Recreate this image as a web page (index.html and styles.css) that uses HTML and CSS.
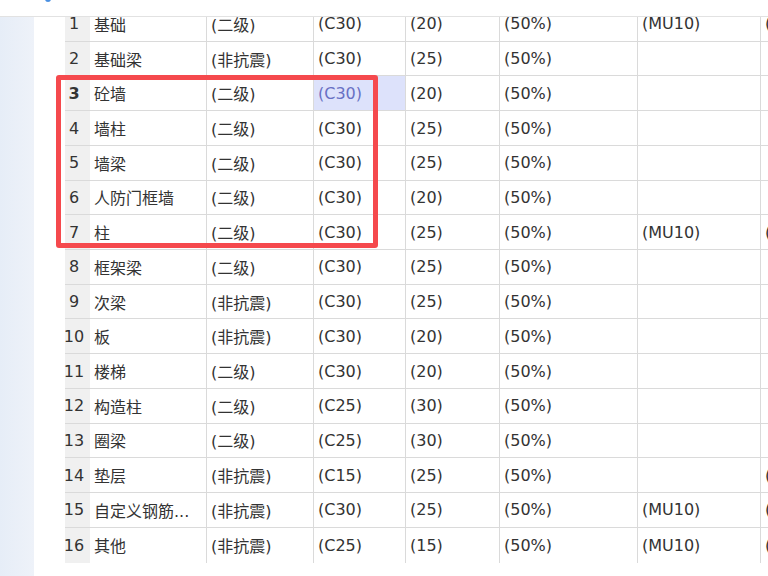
FILE: index.html
```html
<!DOCTYPE html>
<html lang="zh-CN">
<head>
<meta charset="utf-8">
<title>材料设置</title>
<link rel="stylesheet" href="styles.css">
</head>
<body>
<div class="topbar"><span class="dot"></span></div>
<div class="main">
  <div class="side"></div>
  <div class="content">
    <div class="grid">
      <div class="row"><div class="num">1</div><div class="c">基础</div><div class="c">(二级)</div><div class="c">(C30)</div><div class="c">(20)</div><div class="c">(50%)</div><div class="c">(MU10)</div><div class="c">(M5)</div></div>
      <div class="row"><div class="num">2</div><div class="c">基础梁</div><div class="c">(非抗震)</div><div class="c">(C30)</div><div class="c">(25)</div><div class="c">(50%)</div><div class="c"></div><div class="c"></div></div>
      <div class="row"><div class="num bold">3</div><div class="c">砼墙</div><div class="c">(二级)</div><div class="c sel">(C30)</div><div class="c">(20)</div><div class="c">(50%)</div><div class="c"></div><div class="c"></div></div>
      <div class="row"><div class="num">4</div><div class="c">墙柱</div><div class="c">(二级)</div><div class="c">(C30)</div><div class="c">(25)</div><div class="c">(50%)</div><div class="c"></div><div class="c"></div></div>
      <div class="row"><div class="num">5</div><div class="c">墙梁</div><div class="c">(二级)</div><div class="c">(C30)</div><div class="c">(25)</div><div class="c">(50%)</div><div class="c"></div><div class="c"></div></div>
      <div class="row"><div class="num">6</div><div class="c">人防门框墙</div><div class="c">(二级)</div><div class="c">(C30)</div><div class="c">(20)</div><div class="c">(50%)</div><div class="c"></div><div class="c"></div></div>
      <div class="row"><div class="num">7</div><div class="c">柱</div><div class="c">(二级)</div><div class="c">(C30)</div><div class="c">(25)</div><div class="c">(50%)</div><div class="c">(MU10)</div><div class="c">(M5)</div></div>
      <div class="row"><div class="num">8</div><div class="c">框架梁</div><div class="c">(二级)</div><div class="c">(C30)</div><div class="c">(25)</div><div class="c">(50%)</div><div class="c"></div><div class="c"></div></div>
      <div class="row"><div class="num">9</div><div class="c">次梁</div><div class="c">(非抗震)</div><div class="c">(C30)</div><div class="c">(25)</div><div class="c">(50%)</div><div class="c"></div><div class="c"></div></div>
      <div class="row"><div class="num">10</div><div class="c">板</div><div class="c">(非抗震)</div><div class="c">(C30)</div><div class="c">(20)</div><div class="c">(50%)</div><div class="c"></div><div class="c"></div></div>
      <div class="row"><div class="num">11</div><div class="c">楼梯</div><div class="c">(二级)</div><div class="c">(C30)</div><div class="c">(20)</div><div class="c">(50%)</div><div class="c"></div><div class="c"></div></div>
      <div class="row"><div class="num">12</div><div class="c">构造柱</div><div class="c">(二级)</div><div class="c">(C25)</div><div class="c">(30)</div><div class="c">(50%)</div><div class="c"></div><div class="c"></div></div>
      <div class="row"><div class="num">13</div><div class="c">圈梁</div><div class="c">(二级)</div><div class="c">(C25)</div><div class="c">(30)</div><div class="c">(50%)</div><div class="c"></div><div class="c"></div></div>
      <div class="row"><div class="num">14</div><div class="c">垫层</div><div class="c">(非抗震)</div><div class="c">(C15)</div><div class="c">(25)</div><div class="c">(50%)</div><div class="c"></div><div class="c">(M5)</div></div>
      <div class="row"><div class="num">15</div><div class="c">自定义钢筋...</div><div class="c">(非抗震)</div><div class="c">(C30)</div><div class="c">(25)</div><div class="c">(50%)</div><div class="c">(MU10)</div><div class="c">(M5)</div></div>
      <div class="row last"><div class="num">16</div><div class="c">其他</div><div class="c">(非抗震)</div><div class="c">(C25)</div><div class="c">(15)</div><div class="c">(50%)</div><div class="c">(MU10)</div><div class="c">(M5)</div></div>
    </div>
    <div class="mark"></div>
  </div>
</div>
</body>
</html>
```
FILE: styles.css
```css
html, body {
  margin: 0;
  padding: 0;
  background: #ffffff;
  overflow: hidden;
}
body {
  width: 768px;
  height: 576px;
  font-family: "DejaVu Sans", "Noto Sans CJK SC", sans-serif;
  font-size: 16px;
  color: #333333;
}
.topbar {
  height: 16px;
  border-bottom: 1px solid #e2e2e2;
  overflow: hidden;
}
.dot {
  display: block;
  width: 6px;
  height: 6px;
  margin: -4px 0 0 45px;
  border-radius: 50%;
  background: #4a90e2;
}
.main {
  display: flex;
  height: 559px;
}
.side {
  width: 34px;
  flex: none;
  background: linear-gradient(90deg, #e6edf7, #eef2f9);
}
.content {
  flex: 1;
  position: relative;
  overflow: hidden;
  padding-left: 31px;
}
.grid {
  margin-top: -10px;
  width: 760px;
}
.row {
  display: grid;
  grid-template-columns: 25px 117px 107px 92px 94px 138px 123px 1fr;
  height: 34.73px;
  box-sizing: border-box;
  border-bottom: 1px solid #dadada;
}
.row.last {
  border-bottom: none;
}
.num {
  background: #f0f0f0;
  text-align: center;
  padding-right: 7px;
  display: flex;
  align-items: center;
  justify-content: center;
  white-space: nowrap;
}
.bold {
  font-weight: bold;
}
.c {
  border-right: 1px solid #dadada;
  display: flex;
  align-items: center;
  padding-left: 4px;
  white-space: nowrap;
  overflow: hidden;
}
.c:last-child {
  border-right: none;
}
.sel {
  background: #dde2fb;
  color: #6870c4;
}
.mark {
  position: absolute;
  left: 22px;
  top: 58px;
  width: 322px;
  height: 173px;
  box-sizing: border-box;
  border: 5px solid #f5494d;
  border-radius: 3px;
  pointer-events: none;
}
```
